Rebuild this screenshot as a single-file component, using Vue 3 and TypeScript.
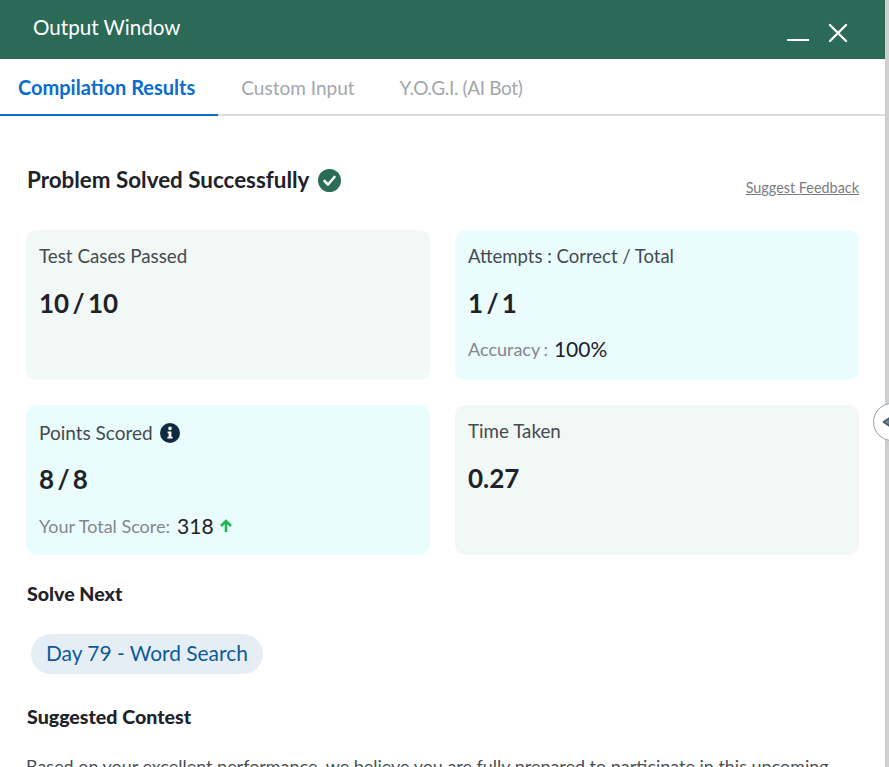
<script setup lang="ts">
interface Tab { label: string; active?: boolean }
const tabs: Tab[] = [
  { label: 'Compilation Results', active: true },
  { label: 'Custom Input' },
  { label: 'Y.O.G.I. (AI Bot)' },
]
</script>

<template>
  <div class="page">
    <div class="window">
      <header class="head">
        <span class="title">Output Window</span>
        <div class="controls">
          <span class="min"></span>
          <svg class="close" width="20" height="20" viewBox="0 0 20 20"><path d="M2 2 L18 18 M18 2 L2 18" stroke="#fff" stroke-width="2.4" stroke-linecap="round"/></svg>
        </div>
      </header>
      <nav class="tabs">
        <div v-for="t in tabs" :key="t.label" class="tab" :class="{ active: t.active }">{{ t.label }}</div>
      </nav>
      <main class="body">
        <div class="solved">
          <h2>Problem Solved Successfully
            <svg width="23" height="23" viewBox="0 0 23 23"><circle cx="11.5" cy="11.5" r="11.5" fill="#2a6b56"/><path d="M6.5 12 L10 15.5 L16.5 8" fill="none" stroke="#fff" stroke-width="2.6" stroke-linecap="round" stroke-linejoin="round"/></svg>
          </h2>
          <a class="feedback">Suggest Feedback</a>
        </div>
        <div class="grid">
          <section class="card grey">
            <div class="label">Test Cases Passed</div>
            <div class="value">10 / 10</div>
          </section>
          <section class="card blue">
            <div class="label attempts">Attempts : Correct / Total</div>
            <div class="value">1 / 1</div>
            <div class="sub acc-row"><span class="acc">Accuracy :</span> <b>100%</b></div>
          </section>
          <section class="card blue points">
            <div class="label">Points Scored
              <svg width="20" height="20" viewBox="0 0 20 20"><circle cx="10" cy="10" r="10" fill="#0f2a3f"/><circle cx="10" cy="5.4" r="1.8" fill="#fff"/><path d="M7.6 8.4 H11.4 V13.8 H12.6 V15.6 H7.4 V13.8 H8.6 V10.2 H7.6 Z" fill="#fff"/></svg>
            </div>
            <div class="value">8 / 8</div>
            <div class="sub"><span>Your Total Score:</span> <b>318</b>
              <svg class="up" width="14" height="14" viewBox="0 0 14 14"><path d="M7 13 V2 M2 7 L7 2 L12 7" fill="none" stroke="#1fb84f" stroke-width="2.6"/></svg>
            </div>
          </section>
          <section class="card grey">
            <div class="label">Time Taken</div>
            <div class="value">0.27</div>
          </section>
        </div>
        <h3 class="sec">Solve Next</h3>
        <div class="pill">Day 79 - Word Search</div>
        <h3 class="sec contest">Suggested Contest</h3>
        <p class="para">Based on your excellent performance, we believe you are fully prepared to participate in this upcoming</p>
      </main>
    </div>
    <div class="edge"></div>
    <div class="handle">
      <svg width="10" height="12" viewBox="0 0 10 12"><path d="M7.5 2 L1.5 6 L7.5 10 Z" fill="#7d8b98" stroke="#4a5a68" stroke-width="1.6" stroke-linejoin="round"/></svg>
    </div>
  </div>
</template>

<style>
html, body { margin: 0; background: #fff; overflow: hidden; }
</style>

<style scoped>
.page { position: relative; display: flex; width: 889px; height: 767px; overflow: hidden; font-family: "Lato", "Liberation Sans", sans-serif; color: #1e2229; }
.window { width: 885px; flex: none; overflow: hidden; }
.edge { width: 4px; background: #cfcfcf; }
.head { height: 59px; background: #2a6a57; display: flex; justify-content: space-between; box-sizing: border-box; padding: 14px 37px 0 33px; color: #fff; }
.title { font-size: 20.6px; line-height: 26px; }
.controls { display: flex; gap: 19px; padding-top: 9px; }
.min { width: 22px; height: 2px; background: #fff; margin-top: 16px; }
.tabs { display: flex; height: 57px; box-sizing: border-box; border-bottom: 2px solid #dedede; }
.tab { font-size: 19px; color: #a2a6ad; padding: 16px 0 0; margin-right: 45px; line-height: 25px; }
.tab:last-child { letter-spacing: -0.35px; }
.tab:first-child { font-size: 20px; padding: 16px 23px 0 18px; margin-right: 23px; margin-bottom: -2px; color: #0a6ccf; font-weight: 700; border-bottom: 2px solid #0a6ccf; }
.body { padding: 0 26px; }
.solved { display: flex; justify-content: space-between; padding-top: 50px; height: 58px; }
h2 { margin: 0 0 0 1px; font-size: 22.4px; font-weight: 700; line-height: 28px; display: flex; align-items: center; gap: 9px; height: 28px; }
.feedback { font-size: 14.4px; color: #7a7d83; text-decoration: underline; line-height: 18px; margin-top: 13px; }
.grid { display: grid; grid-template-columns: 404px 404px; column-gap: 25px; row-gap: 25px; margin-top: 6px; }
.card { height: 150px; border-radius: 10px; box-sizing: border-box; padding: 14px 13px; }
.grey { background: #f2f8f6; }
.blue { background: #ebfcff; }
.label { font-size: 18.8px; line-height: 24px; color: #444a50; display: flex; align-items: center; gap: 6px; }
.attempts { font-size: 18.5px; }
.value { font-size: 26px; font-weight: 700; line-height: 32px; margin-top: 19px; word-spacing: -3px; }
.sub { margin-top: 18px; display: flex; align-items: center; gap: 7px; line-height: 24px; }
.sub span { color: #83878c; font-size: 18px; }
.acc-row { gap: 6px; }
.sub .acc { word-spacing: -1px; }
.sub b { font-weight: 400; font-size: 21px; }
.up { margin-left: -2px; }
.points .label { margin-top: 2px; font-size: 19px; gap: 7px; }
.points .value { margin-top: 18px; }
.points .sub { margin-top: 19px; }
.sec { margin: 0 0 0 1px; font-size: 19.6px; font-weight: 900; line-height: 24px; }
.grid + .sec { margin-top: 27px; }
.pill { display: inline-block; margin: 28px 0 0 5px; height: 40px; line-height: 38px; padding: 0 15px; background: #e6eef5; border-radius: 20px; color: #0c5a9c; font-size: 20.9px; }
.contest { margin-top: 31px; }
.para { margin: 25px 0 0; font-size: 17.95px; line-height: 24px; color: #4a4f55; white-space: nowrap; }
.handle { position: absolute; left: 873px; top: 403px; width: 38px; height: 38px; border-radius: 50%; box-sizing: border-box; background: #fff; border: 1.5px solid #93a1ae; display: flex; align-items: center; padding-left: 8px; }
</style>
